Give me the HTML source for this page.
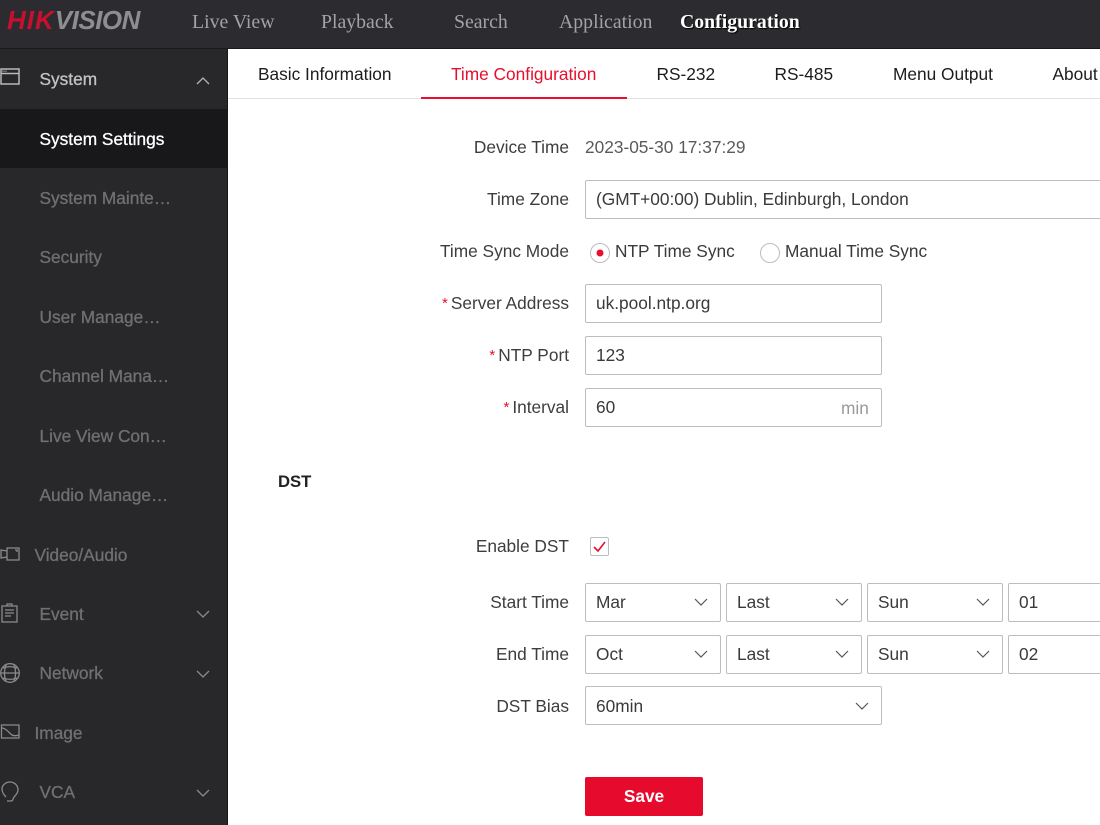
<!DOCTYPE html>
<html lang="en">
<head>
<meta charset="utf-8">
<title>Time Configuration</title>
<style>
html,body{margin:0;padding:0;width:1100px;height:825px;overflow:hidden;background:#fff;font-family:"Liberation Sans",sans-serif}
#p{position:relative;width:1100px;height:825px;overflow:hidden;filter:blur(.3px)}
.a{position:absolute}
.t{position:absolute;white-space:nowrap;line-height:24px;height:24px}
.top{font-family:"Liberation Serif",serif;font-size:19.8px;color:#a3a3a5;top:10px}
.tab{font-size:17.3px;color:#1c1c1c;top:62px}
.side{font-size:17.3px;color:#707072;-webkit-text-stroke:.3px currentColor}
.lab{font-size:17.3px;color:#3d3d3d;text-align:right;right:531px}
.val{font-size:17.3px;color:#3a3a3a}
.box{position:absolute;box-sizing:border-box;border:1px solid #bdbdc0;border-radius:2px;background:#fff;height:39px}
.star{color:#e60f2d;font-size:15px;margin-right:3px;vertical-align:1px}
svg{position:absolute;overflow:visible}
</style>
</head>
<body>
<div id="p">
<div class="a" style="left:0;top:0;width:1100px;height:49px;background:#2c2c30"></div>
<div class="a" style="left:0;top:48px;width:1100px;height:1px;background:#19191b"></div>
<div class="t" style="left:7px;top:6px;font-size:26px;line-height:28px;height:28px;font-weight:bold;font-style:italic;color:#c8102e"><span style="letter-spacing:1px">HIK</span><span style="color:#8e8e90;letter-spacing:-.5px">VISION</span></div>
<div class="t top" style="left:192px">Live View</div>
<div class="t top" style="left:321px">Playback</div>
<div class="t top" style="left:454px">Search</div>
<div class="t top" style="left:559px">Application</div>
<div class="t top" style="left:680px;color:#fff;font-weight:bold;text-shadow:1px 1px 1px #000">Configuration</div>

<div class="a" style="left:0;top:49px;width:227px;height:776px;background:#28282b"></div>
<div class="a" style="left:227px;top:49px;width:1px;height:776px;background:#171718"></div>
<div class="a" style="left:0;top:109px;width:227px;height:59px;background:#18181a"></div>
<svg style="left:0;top:0" width="227" height="825" fill="none" stroke="#8a8a8c" stroke-width="1.3">
<path d="M1 69H19V84H1ZM1 73.500H19" stroke="#b8b8ba" stroke-width="1.500"/>
<path d="M2.500 71.200H7" stroke="#b8b8ba" stroke-dasharray="1 1"/>
<path d="M197 84L203 78L209 84" stroke="#b5b5b7"/>
<path d="M7 548H19V560H7ZM7 551L1 550V558L7 557M15 550H17V552"/>
<path d="M2 606H17V622H2ZM7 606V604H12V606M5 610H14M5 613H14M5 616H11"/>
<path d="M197 611L203 617L209 611M197 671L203 677L209 671M197 790L203 796L209 790"/>
<circle cx="10" cy="673" r="9.300"/><path d="M1 673H19M3 668C8 666 12 666 17 668M3 678C8 680 12 680 17 678M6 665C4 670 4 676 6 681M14 665C16 670 16 676 14 681"/>
<path d="M1.500 725H19V738H1.500ZM2 728C6 728 9 733 12 735C14 736 16 736 19 735"/>
<path d="M6 797C3 794 2 791 2 789C2 785 6 782 10 782C14 782 18 785 18 790C18 794 14 796 13 799C13 800 12 801 11 801L7 801"/>
</svg>
<div class="t side" style="left:39.500px;top:67px;color:#c2c2c4">System</div>
<div class="t side" style="left:39.500px;top:127px;color:#fff">System Settings</div>
<div class="t side" style="left:39.500px;top:186px">System Mainte…</div>
<div class="t side" style="left:39.500px;top:245px">Security</div>
<div class="t side" style="left:39.500px;top:305px">User Manage…</div>
<div class="t side" style="left:39.500px;top:364px">Channel Mana…</div>
<div class="t side" style="left:39.500px;top:424px">Live View Con…</div>
<div class="t side" style="left:39.500px;top:483px">Audio Manage…</div>
<div class="t side" style="left:34.500px;top:543px">Video/Audio</div>
<div class="t side" style="left:39.500px;top:602px">Event</div>
<div class="t side" style="left:39.500px;top:661px">Network</div>
<div class="t side" style="left:34.500px;top:721px">Image</div>
<div class="t side" style="left:39.500px;top:780px">VCA</div>

<div class="a" style="left:228px;top:98px;width:872px;height:1px;background:#e2e2e4"></div>
<div class="a" style="left:421px;top:97px;width:206px;height:2px;background:#e60f2d"></div>
<div class="t tab" style="left:258px">Basic Information</div>
<div class="t tab" style="left:451px;color:#e60f2d">Time Configuration</div>
<div class="t tab" style="left:656.500px">RS-232</div>
<div class="t tab" style="left:774.500px">RS-485</div>
<div class="t tab" style="left:893px">Menu Output</div>
<div class="t tab" style="left:1052.500px">About</div>

<div class="t lab" style="top:135px">Device Time</div>
<div class="t val" style="left:585px;top:135px;color:#5a5a5a">2023-05-30 17:37:29</div>
<div class="t lab" style="top:187px">Time Zone</div>
<div class="box" style="left:585px;top:180px;width:530px"></div>
<div class="t val" style="left:596px;top:187px">(GMT+00:00) Dublin, Edinburgh, London</div>
<div class="t lab" style="top:239px">Time Sync Mode</div>
<svg style="left:0;top:0" width="1100" height="825" fill="none">
<circle cx="600" cy="253" r="9.500" fill="#fff" stroke="#bdbdc0"/><circle cx="600" cy="253" r="3.500" fill="#e60f2d"/>
<circle cx="770" cy="253" r="9.500" fill="#fff" stroke="#bdbdc0"/>
</svg>
<div class="t val" style="left:615px;top:239px">NTP Time Sync</div>
<div class="t val" style="left:785px;top:239px">Manual Time Sync</div>
<div class="t lab" style="top:291px"><span class="star">*</span>Server Address</div>
<div class="box" style="left:585px;top:284px;width:297px"></div>
<div class="t val" style="left:596px;top:291px">uk.pool.ntp.org</div>
<div class="t lab" style="top:343px"><span class="star">*</span>NTP Port</div>
<div class="box" style="left:585px;top:336px;width:297px"></div>
<div class="t val" style="left:596px;top:343px">123</div>
<div class="t lab" style="top:395px"><span class="star">*</span>Interval</div>
<div class="box" style="left:585px;top:388px;width:297px"></div>
<div class="t val" style="left:596px;top:395px">60</div>
<div class="t val" style="left:841px;top:396px;color:#9a9a9a">min</div>

<div class="t" style="left:278px;top:470px;font-size:16.700px;font-weight:bold;color:#222">DST</div>

<div class="t lab" style="top:534px">Enable DST</div>
<div class="box" style="left:590px;top:537px;width:19px;height:19px"></div>
<div class="t lab" style="top:590px">Start Time</div>
<div class="box" style="left:585px;top:583px;width:136px"></div>
<div class="box" style="left:726px;top:583px;width:136px"></div>
<div class="box" style="left:867px;top:583px;width:136px"></div>
<div class="box" style="left:1008px;top:583px;width:136px"></div>
<div class="t val" style="left:596px;top:590px">Mar</div>
<div class="t val" style="left:737px;top:590px">Last</div>
<div class="t val" style="left:878px;top:590px">Sun</div>
<div class="t val" style="left:1019px;top:590px">01</div>
<div class="t lab" style="top:642px">End Time</div>
<div class="box" style="left:585px;top:635px;width:136px"></div>
<div class="box" style="left:726px;top:635px;width:136px"></div>
<div class="box" style="left:867px;top:635px;width:136px"></div>
<div class="box" style="left:1008px;top:635px;width:136px"></div>
<div class="t val" style="left:596px;top:642px">Oct</div>
<div class="t val" style="left:737px;top:642px">Last</div>
<div class="t val" style="left:878px;top:642px">Sun</div>
<div class="t val" style="left:1019px;top:642px">02</div>
<div class="t lab" style="top:694px">DST Bias</div>
<div class="box" style="left:585px;top:686px;width:297px"></div>
<div class="t val" style="left:596px;top:694px">60min</div>
<svg style="left:0;top:0" width="1100" height="825" fill="none" stroke="#55555a" stroke-width="1.200">
<path d="M594 547L598 551L605 542" stroke="#e60f2d" stroke-width="1.600"/>
<path d="M695 599L701 605L707 599M836 599L842 605L848 599M977 599L983 605L989 599M695 651L701 657L707 651M836 651L842 657L848 651M977 651L983 657L989 651M856 703L862 709L868 703"/>
</svg>
<div class="a" style="left:585px;top:777px;width:118px;height:39px;border-radius:2px;background:#e60a2d"></div>
<div class="t" style="left:585px;top:784px;width:118px;text-align:center;font-size:17.300px;font-weight:bold;color:#fff">Save</div>
</div>
</body>
</html>
